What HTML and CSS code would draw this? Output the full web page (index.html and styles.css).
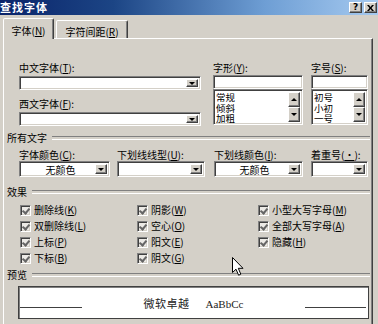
FILE: index.html
```
<!DOCTYPE html>
<html lang="zh-CN">
<head>
<meta charset="utf-8">
<title>查找字体</title>
<link rel="stylesheet" href="styles.css">
</head>
<body>
<div class="dialog">
  <div class="titlebar">
    <span class="title">查找字体</span>
    <div class="tb-buttons">
      <span class="tb-btn">?</span>
      <span class="tb-btn tb-close">
        <svg width="7" height="6" viewBox="0 0 7 6"><path d="M0 0h2l1.5 2L5 0h2L4.5 3L7 6H5L3.5 4L2 6H0l2.5-3z" fill="#000"/></svg>
      </span>
    </div>
  </div>

  <div class="tabs">
    <div class="tab tab-active">字体(<u>N</u>)</div>
    <div class="tab tab-spacing">字符间距(<u>R</u>)</div>
  </div>

  <div class="panel">
    <div class="fonts-row">
      <div class="col-face">
        <div class="lbl">中文字体(<u>T</u>):</div>
        <div class="combo combo-sm"><span class="field"></span><span class="drop"><i class="tri"></i></span></div>
        <div class="lbl lbl-gap">西文字体(<u>F</u>):</div>
        <div class="combo combo-sm"><span class="field"></span><span class="drop"><i class="tri"></i></span></div>
      </div>
      <div class="col-style">
        <div class="lbl">字形(<u>Y</u>):</div>
        <div class="textbox"></div>
        <div class="listbox">
          <div class="items"><div>常规</div><div>倾斜</div><div>加粗</div></div>
          <div class="vscroll">
            <span class="sbtn"><i class="tri-up"></i></span>
            <span class="sbtn"><i class="tri"></i></span>
          </div>
        </div>
      </div>
      <div class="col-size">
        <div class="lbl">字号(<u>S</u>):</div>
        <div class="textbox"></div>
        <div class="listbox">
          <div class="items"><div>初号</div><div>小初</div><div>一号</div></div>
          <div class="vscroll">
            <span class="sbtn"><i class="tri-up"></i></span>
            <span class="sbtn"><i class="tri"></i></span>
          </div>
        </div>
      </div>
    </div>

    <div class="group-head head-all">所有文字</div>
    <div class="attr-row">
      <div class="attr a1">
        <div class="lbl">字体颜色(<u>C</u>):</div>
        <div class="combo combo-md"><span class="field">无颜色</span><span class="drop"><i class="tri"></i></span></div>
      </div>
      <div class="attr a2">
        <div class="lbl">下划线线型(<u>U</u>):</div>
        <div class="combo combo-md"><span class="field"></span><span class="drop"><i class="tri"></i></span></div>
      </div>
      <div class="attr a3">
        <div class="lbl">下划线颜色(<u>I</u>):</div>
        <div class="combo combo-md"><span class="field">无颜色</span><span class="drop"><i class="tri"></i></span></div>
      </div>
      <div class="attr a4">
        <div class="lbl">着重号(<u>·</u>):</div>
        <div class="combo combo-md"><span class="field"></span><span class="drop"><i class="tri"></i></span></div>
      </div>
    </div>

    <div class="group-head head-effect">效果</div>
    <div class="effects">
      <div class="chk"><span class="box"></span>删除线(<u>K</u>)</div>
      <div class="chk"><span class="box"></span>阴影(<u>W</u>)</div>
      <div class="chk"><span class="box"></span>小型大写字母(<u>M</u>)</div>
      <div class="chk"><span class="box"></span>双删除线(<u>L</u>)</div>
      <div class="chk"><span class="box"></span>空心(<u>O</u>)</div>
      <div class="chk"><span class="box"></span>全部大写字母(<u>A</u>)</div>
      <div class="chk"><span class="box"></span>上标(<u>P</u>)</div>
      <div class="chk"><span class="box"></span>阳文(<u>E</u>)</div>
      <div class="chk"><span class="box"></span>隐藏(<u>H</u>)</div>
      <div class="chk"><span class="box"></span>下标(<u>B</u>)</div>
      <div class="chk"><span class="box"></span>阴文(<u>G</u>)</div>
    </div>

    <div class="group-head head-preview">预览</div>
    <div class="preview">
      <span class="base-line"></span>
      <span class="sample"><span class="sample-cjk">微软卓越</span><span class="sample-latin">AaBbCc</span></span>
      <span class="base-line base-right"></span>
    </div>
  </div>

  <svg class="cursor" width="12" height="19" viewBox="0 0 12 19">
    <path d="M0.5 0.5V15.5L4 12.2L6.6 18.2L8.8 17.2L6.3 11.3H11L0.5 0.5Z" fill="#fff" stroke="#000" stroke-width="1"/>
  </svg>
</div>
</body>
</html>
```

FILE: styles.css
```
* { box-sizing: border-box; }

body {
  margin: 0;
  width: 378px;
  height: 324px;
  overflow: hidden;
  background: #d4d0c8;
  font-family: "Noto Sans CJK SC", "Noto Sans", sans-serif;
  font-size: 10px;
  color: #000;
}

u { text-decoration: underline; text-underline-offset: 1px; }

.dialog {
  position: relative;
  width: 378px;
  height: 324px;
  background: #d4d0c8;
}

/* title bar */
.titlebar {
  height: 15px;
  display: flex;
  justify-content: space-between;
  align-items: center;
  background: linear-gradient(90deg, #0a246a 0%, #1c4585 30%, #6e9ed4 70%, #a6caf0 100%);
}
.title {
  color: #fff;
  font-weight: bold;
  font-size: 11px;
  line-height: 15px;
  letter-spacing: 1px;
}
.tb-buttons {
  display: flex;
  gap: 2px;
  padding-right: 1px;
}
.tb-btn {
  width: 13px;
  height: 11px;
  background: #d4d0c8;
  border: 1px solid;
  border-color: #fff #404040 #404040 #fff;
  box-shadow: inset -1px -1px #808080;
  font: bold 9px/9px "DejaVu Sans", sans-serif;
  text-align: center;
  display: flex;
  align-items: center;
  justify-content: center;
}

/* tabs */
.tabs {
  height: 23px;
  display: flex;
  align-items: flex-end;
  padding-left: 3px;
  position: relative;
  z-index: 1;
}
.tab {
  height: 18px;
  border: 1px solid;
  border-bottom: none;
  border-color: #fff #404040 transparent #fff;
  box-shadow: inset -1px 0 #808080;
  border-radius: 2px 2px 0 0;
  padding-top: 5px;
  line-height: 12px;
  text-align: center;
  background: #d4d0c8;
  white-space: nowrap;
}
.tab-active {
  width: 51px;
  height: 21px;
  padding-top: 6px;
  margin-bottom: -1px;
}
.tab-spacing {
  width: 72px;
  margin-left: 2px;
}

/* panel */
.panel {
  margin-left: 3px;
  width: 370px;
  height: 300px;
  border: 1px solid;
  border-color: #fff #404040 #404040 #fff;
  box-shadow: inset -1px -1px #808080;
  padding: 23px 2px 0 3px;
}

.lbl {
  height: 12px;
  line-height: 12px;
  white-space: nowrap;
}

/* sunken field base */
.combo, .textbox, .listbox {
  background: #fff;
  border: 1px solid;
  border-color: #808080 #fff #fff #808080;
  box-shadow: inset 1px 1px #404040, inset -1px -1px #d4d0c8;
}

.combo {
  display: flex;
  align-items: stretch;
  padding: 2px;
}
.combo .field {
  flex: 1;
  text-align: center;
  line-height: 10px;
  font-size: 10px;
  white-space: nowrap;
}
.combo-md .field { line-height: 11px; padding-left: 4px; }
.drop {
  width: 12px;
  background: #d4d0c8;
  border: 1px solid;
  border-color: #fff #404040 #404040 #fff;
  box-shadow: inset -1px -1px #808080;
  display: flex;
  align-items: center;
  justify-content: center;
}
.tri {
  width: 0;
  height: 0;
  border-left: 3px solid transparent;
  border-right: 3px solid transparent;
  border-top: 3px solid #000;
}
.tri-up {
  width: 0;
  height: 0;
  border-left: 3px solid transparent;
  border-right: 3px solid transparent;
  border-bottom: 3px solid #000;
}

/* row 1 */
.fonts-row {
  display: flex;
  padding-left: 12px;
}
.col-face { width: 182px; }
.col-style { width: 90px; margin-left: 12px; }
.col-size { width: 57px; margin-left: 8px; }

.combo-sm { height: 14px; margin-top: 2px; }
.lbl-gap { margin-top: 8px; }

.textbox { height: 14px; margin-top: 1px; }
.listbox {
  height: 36px;
  display: flex;
  padding: 2px;
}
.items {
  flex: 1;
  font-size: 9.5px;
  line-height: 10.6px;
}
.vscroll {
  width: 12px;
  display: flex;
  flex-direction: column;
}
.sbtn {
  flex: 1;
  background: #d4d0c8;
  border: 1px solid;
  border-color: #fff #404040 #404040 #fff;
  box-shadow: inset -1px -1px #808080;
  display: flex;
  align-items: center;
  justify-content: center;
}

/* group heads */
.group-head {
  height: 12px;
  line-height: 12px;
  display: flex;
  align-items: center;
  white-space: nowrap;
}
.group-head::after {
  content: "";
  flex: 1;
  height: 2px;
  margin-left: 5px;
  border-top: 1px solid #808080;
  border-bottom: 1px solid #fff;
}
.head-all { margin-top: 6px; }
.head-effect { margin-top: 9px; }
.head-preview { margin-top: 3px; }

/* row 2 */
.attr-row {
  display: flex;
  padding-left: 12px;
  margin-top: 5px;
}
.a1 { width: 91px; }
.a2 { width: 88px; margin-left: 7px; }
.a3 { width: 89px; margin-left: 9px; }
.a4 { width: 57px; margin-left: 8px; }
.combo-md { height: 16px; }

/* effects */
.effects {
  display: grid;
  grid-template-columns: 117px 121px 1fr;
  grid-auto-rows: 16px;
  padding-left: 13px;
  margin-top: 4px;
}
.chk {
  display: flex;
  align-items: center;
  white-space: nowrap;
  line-height: 12px;
}
.box {
  width: 11px;
  height: 11px;
  margin-right: 3px;
  background: #eceae6;
  border: 1px solid;
  border-color: #808080 #fff #fff #808080;
  box-shadow: inset 1px 1px #404040, inset -1px -1px #d4d0c8;
  position: relative;
}
.box::after {
  content: "";
  position: absolute;
  left: 2px;
  top: 1px;
  width: 3px;
  height: 5px;
  border-right: 2px solid #666;
  border-bottom: 2px solid #666;
  transform: rotate(40deg);
  transform-origin: 60% 60%;
}

/* preview */
.preview {
  margin-top: 5px;
  margin-left: 11px;
  width: 351px;
  height: 33px;
  background: #fff;
  border: 1px solid #404040;
  box-shadow: inset 1px 1px #808080;
  display: flex;
  align-items: center;
  padding: 0 2px 0 1px;
}
.base-line {
  width: 62px;
  height: 1px;
  background: #404040;
  margin-top: 9px;
}
.base-right { width: 61px; }
.sample {
  flex: 1;
  text-align: center;
  white-space: nowrap;
  color: #222;
}
.sample-cjk {
  font-size: 11px;
  letter-spacing: 0.5px;
}
.sample-latin {
  font-family: "Liberation Serif", serif;
  font-size: 11px;
  margin-left: 16px;
}

.cursor {
  position: absolute;
  left: 232px;
  top: 257px;
}
```
